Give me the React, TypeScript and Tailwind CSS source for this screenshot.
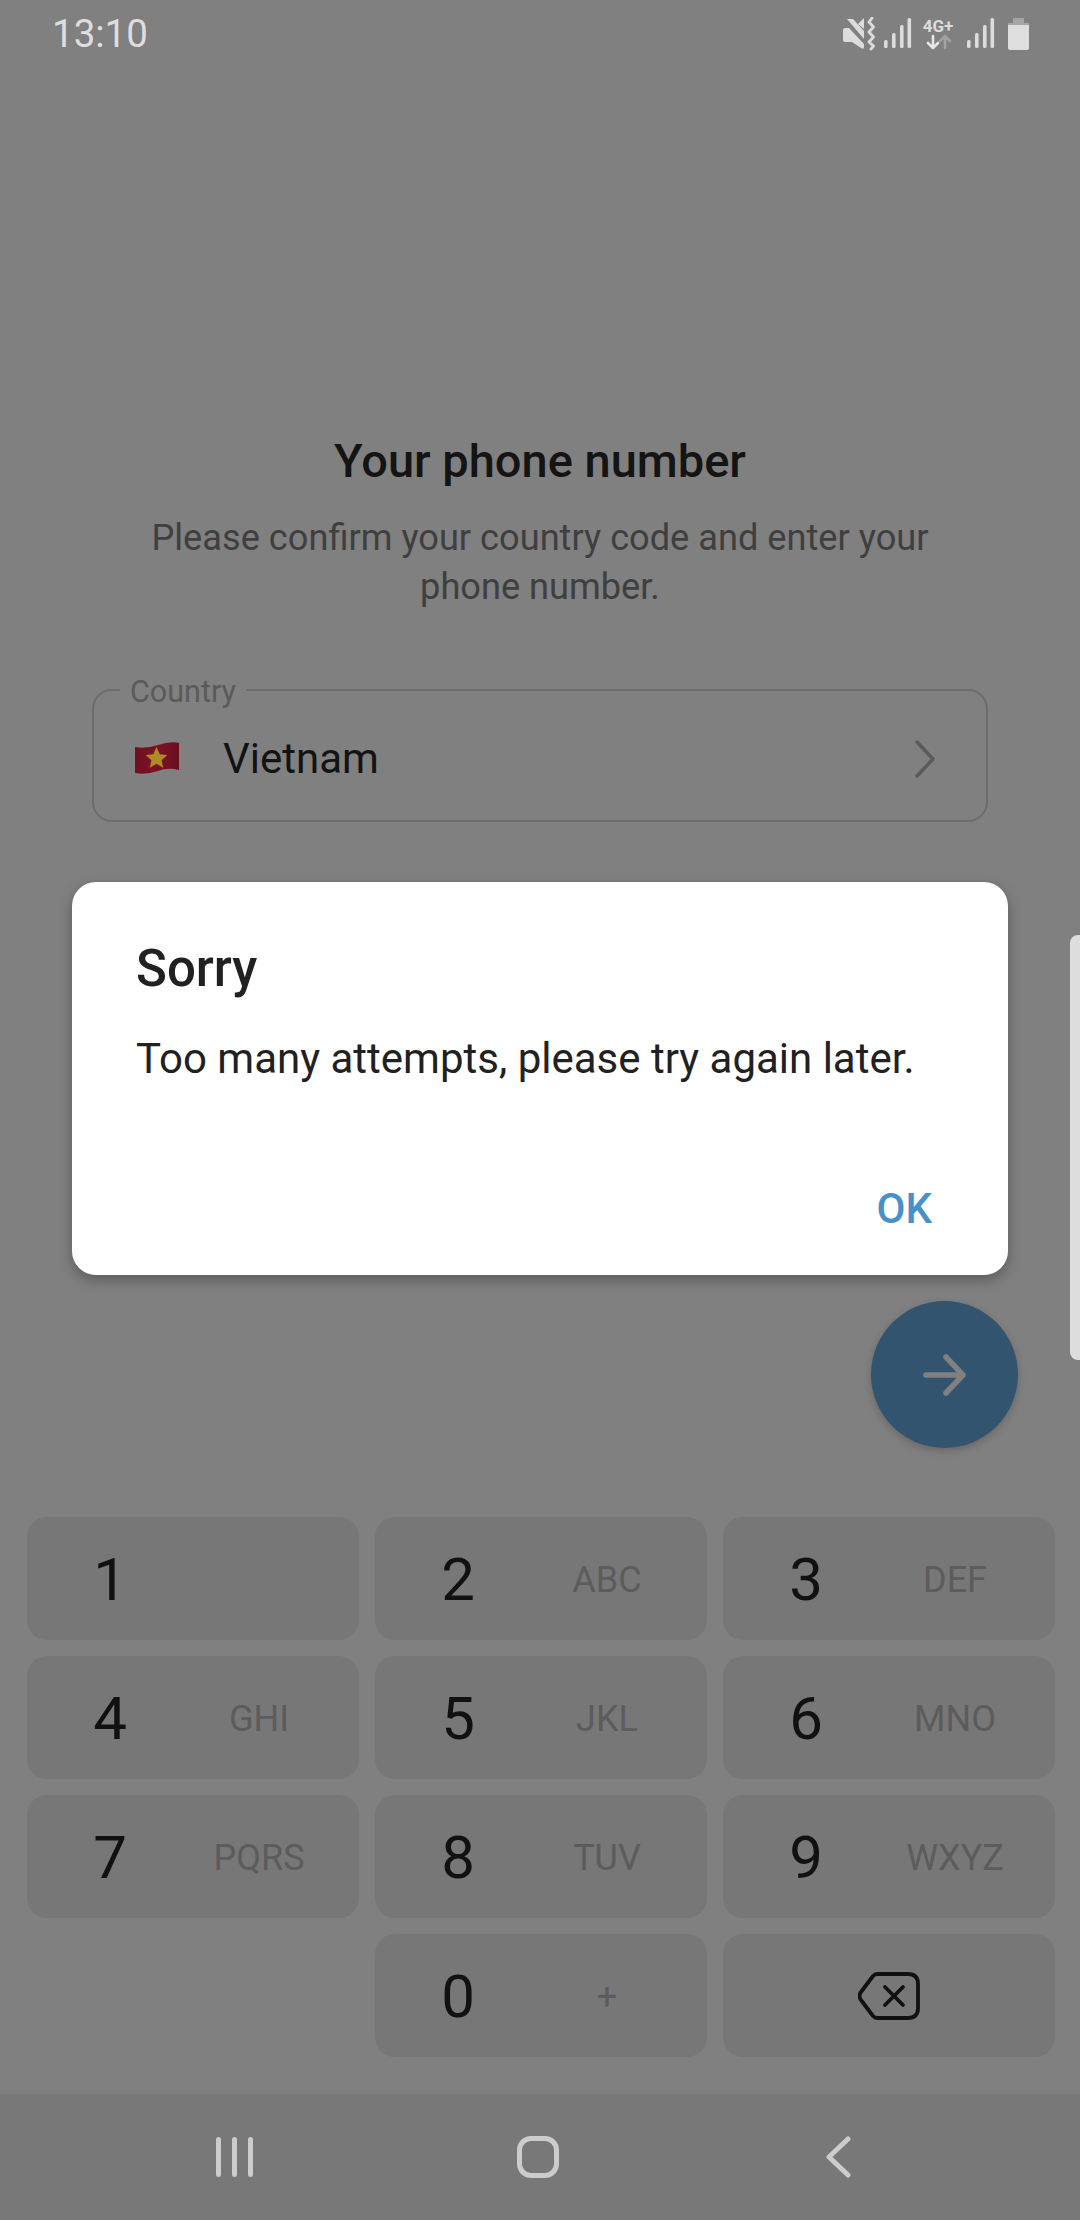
const FONT = "font-['Roboto',sans-serif]"

const keys = [
  { digit: '1', letters: '' },
  { digit: '2', letters: 'ABC' },
  { digit: '3', letters: 'DEF' },
  { digit: '4', letters: 'GHI' },
  { digit: '5', letters: 'JKL' },
  { digit: '6', letters: 'MNO' },
  { digit: '7', letters: 'PQRS' },
  { digit: '8', letters: 'TUV' },
  { digit: '9', letters: 'WXYZ' },
]

const SignalBars = () => (
  <svg width="28" height="34" viewBox="0 0 28 34" fill="#dcdcdc">
    <rect x="0" y="23" width="3.6" height="8" rx="1.5" />
    <rect x="8" y="16" width="3.6" height="15" rx="1.5" />
    <rect x="16" y="8" width="3.6" height="23" rx="1.5" />
    <rect x="23.5" y="1" width="3.6" height="30" rx="1.5" />
  </svg>
)

const MuteIcon = () => (
  <svg width="33" height="34" viewBox="0 0 33 34">
    <path d="M0 13 Q0 11 2 11 L6 11 L21 27 L21 30 Q21 33 18 31 L9 25 L2 25 Q0 25 0 23 Z" fill="#dcdcdc" />
    <path d="M4 2 L21 22 L21 14 L10 2 Z" fill="#dcdcdc" />
    <path d="M15 7 L21 1 L21 12 Z" fill="#dcdcdc" />
    <path
      d="M29 1 L26 5 L30.5 10 L26 15 L30.5 20 L26 25 L30.5 29 L28 32"
      stroke="#dcdcdc"
      strokeWidth="2.8"
      fill="none"
      strokeLinecap="round"
      strokeLinejoin="round"
    />
  </svg>
)

const NetworkIcon = () => (
  <div className="flex w-[32px] flex-col items-center">
    <span className="text-[17px] leading-[15px] font-bold text-[#dcdcdc]">4G+</span>
    <svg width="28" height="16" viewBox="0 0 28 16" fill="none" strokeWidth="2.6" strokeLinecap="round" strokeLinejoin="round">
      <path d="M9 2 V14 M4 9 L9 14 L14 9" stroke="#e6e6e6" />
      <path d="M21 14 V2 M16 7 L21 2 L26 7" stroke="#a2a2a2" />
    </svg>
  </div>
)

const BatteryIcon = () => (
  <svg width="21" height="33" viewBox="0 0 21 33">
    <path d="M5 1 Q5 0 6 0 H15 Q16 0 16 1 V5 H20 Q21 5 21 6 V7 H0 V6 Q0 5 1 5 H5 Z" fill="#a6a6a6" />
    <path d="M0 7 H21 V30 Q21 32 19 32 H2 Q0 32 0 30 Z" fill="#dedede" />
  </svg>
)

const StatusBar = () => (
  <div className="flex h-[68px] shrink-0 items-center justify-between pr-[51px] pl-[52px]">
    <span className="text-[38.5px] leading-none text-[#dedede]">13:10</span>
    <div className="flex items-center">
      <MuteIcon />
      <div className="ml-[8px]"><SignalBars /></div>
      <div className="ml-[10px]"><NetworkIcon /></div>
      <div className="ml-[13px]"><SignalBars /></div>
      <div className="ml-[13px]"><BatteryIcon /></div>
    </div>
  </div>
)

const VietnamFlag = () => (
  <svg className="mt-[4px] shrink-0" width="46" height="34" viewBox="0 0 46 34">
    <defs>
      <linearGradient id="flag" x1="0" x2="1" y1="0" y2="0">
        <stop offset="0" stopColor="#701022" />
        <stop offset="0.5" stopColor="#7c1224" />
        <stop offset="1" stopColor="#6a0f20" />
      </linearGradient>
    </defs>
    <path d="M1 6 Q12 8 24 4 Q36 0 45 2 V29 Q34 26 24 30 Q12 34 1 32 Z" fill="url(#flag)" />
    <path d="M22.5 6 L25.7 13.3 L33.3 14 L27.6 19.2 L29.2 26.8 L22.5 22.8 L15.8 26.8 L17.4 19.2 L11.7 14 L19.3 13.3 Z" fill="#b08a25" />
  </svg>
)

const CountryField = () => (
  <div className="relative mx-[92px] mt-[78px] flex h-[133px] items-start rounded-[20px] border-2 border-[#6d6d6d] pt-[46px] pr-[49px] pl-[40px]">
    <span className="absolute -top-[17px] left-[26px] bg-[#808080] px-[10px] text-[30.5px] leading-[36px] text-[#5a5a5a]">
      Country
    </span>
    <VietnamFlag />
    <span className="ml-[43px] flex-1 text-[42px] leading-[44px] text-[#131313]">Vietnam</span>
    <svg className="mt-[2px]" width="24" height="40" viewBox="0 0 24 40" fill="none">
      <path d="M4 3 L20 20 L4 37" stroke="#5a5a5a" strokeWidth="3.4" strokeLinecap="round" strokeLinejoin="round" />
    </svg>
  </div>
)

const Key = ({ digit, letters }: { digit: string; letters: string }) => (
  <div className="flex h-[123px] items-center rounded-[20px] bg-[#777777]">
    <span className="w-[166px] pt-[3px] text-center text-[60px] leading-none text-[#111111]">{digit}</span>
    <span className="w-[132px] pt-[2px] text-center text-[36px] leading-none text-[#5c5c5c]">{letters}</span>
  </div>
)

const Keypad = () => (
  <div className="grid grid-cols-3 gap-x-[16px] gap-y-[16px] pr-[25px] pb-[37px] pl-[27px]">
    {keys.map((k) => (
      <Key key={k.digit} digit={k.digit} letters={k.letters} />
    ))}
    <div />
    <Key digit="0" letters="+" />
    <div className="flex h-[123px] items-center justify-center rounded-[20px] bg-[#777777]">
      <svg width="62" height="48" viewBox="0 0 62 48" fill="none" stroke="#111111" strokeLinecap="round" strokeLinejoin="round">
        <path d="M19 2 H50 Q60 2 60 12 V36 Q60 46 50 46 H19 Q17 46 15 44 L3 28 Q0 24 3 20 L15 4 Q17 2 19 2 Z" strokeWidth="3.8" />
        <path d="M27 15 L45 33 M45 15 L27 33" strokeWidth="3.8" />
      </svg>
    </div>
  </div>
)

const NavBar = () => (
  <div className="flex h-[126px] shrink-0 items-center bg-[#787878] pl-[216px]">
    <svg width="38" height="40" viewBox="0 0 38 40" fill="#cccccc">
      <rect x="0" y="0" width="5" height="40" rx="2.5" />
      <rect x="16" y="0" width="5" height="40" rx="2.5" />
      <rect x="32" y="0" width="5" height="40" rx="2.5" />
    </svg>
    <div className="ml-[263px] h-[42px] w-[42px] rounded-[14px] border-[5px] border-[#cccccc]" />
    <svg className="ml-[266px]" width="26" height="42" viewBox="0 0 26 42" fill="none">
      <path d="M23 3 L4 21 L23 39" stroke="#cccccc" strokeWidth="5" strokeLinecap="round" strokeLinejoin="round" />
    </svg>
  </div>
)

const Dialog = () => (
  <div className="absolute top-[882px] left-[72px] flex h-[393px] w-[936px] flex-col rounded-[24px] bg-white px-[64px] shadow-[0_5px_14px_rgba(0,0,0,0.3)]">
    <h2 className="mt-[59px] text-[51px] leading-[56px] font-medium text-[#212121]">Sorry</h2>
    <p className="mt-[38px] text-[42px] leading-[48px] whitespace-nowrap text-[#212121]">Too many attempts, please try again later.</p>
    <div className="mt-auto mb-[43px] flex justify-end pr-[12px]">
      <span className="text-[42px] leading-[46px] font-medium text-[#4a90c8]">OK</span>
    </div>
  </div>
)

export default function App() {
  return (
    <div className={`${FONT} relative flex h-[2220px] w-[1080px] flex-col overflow-hidden bg-[#808080]`}>
      <StatusBar />
      <div className="flex flex-1 flex-col">
        <h1 className="mt-[368px] text-center text-[47px] leading-[50px] font-medium text-[#141414]">Your phone number</h1>
        <p className="mt-[27px] text-center text-[36.2px] leading-[49px] text-[#3f3f3f]">
          Please confirm your country code and enter your
          <br />
          phone number.
        </p>
        <CountryField />
        <div className="mt-auto mb-[69px] flex justify-end pr-[62px]">
          <div className="flex h-[147px] w-[147px] items-center justify-center rounded-full bg-[#33546f] shadow-[0_3px_8px_rgba(0,0,0,0.2)]">
            <svg width="44" height="42" viewBox="0 0 44 42" fill="none">
              <path d="M3 21 H40 M23 3 L40 21 L23 39" stroke="#808080" strokeWidth="5.5" strokeLinecap="round" strokeLinejoin="round" />
            </svg>
          </div>
        </div>
      </div>
      <Keypad />
      <NavBar />
      <div className="absolute top-[935px] right-0 h-[425px] w-[10px] rounded-l-[8px] bg-[#dddddd]" />
      <Dialog />
    </div>
  )
}
